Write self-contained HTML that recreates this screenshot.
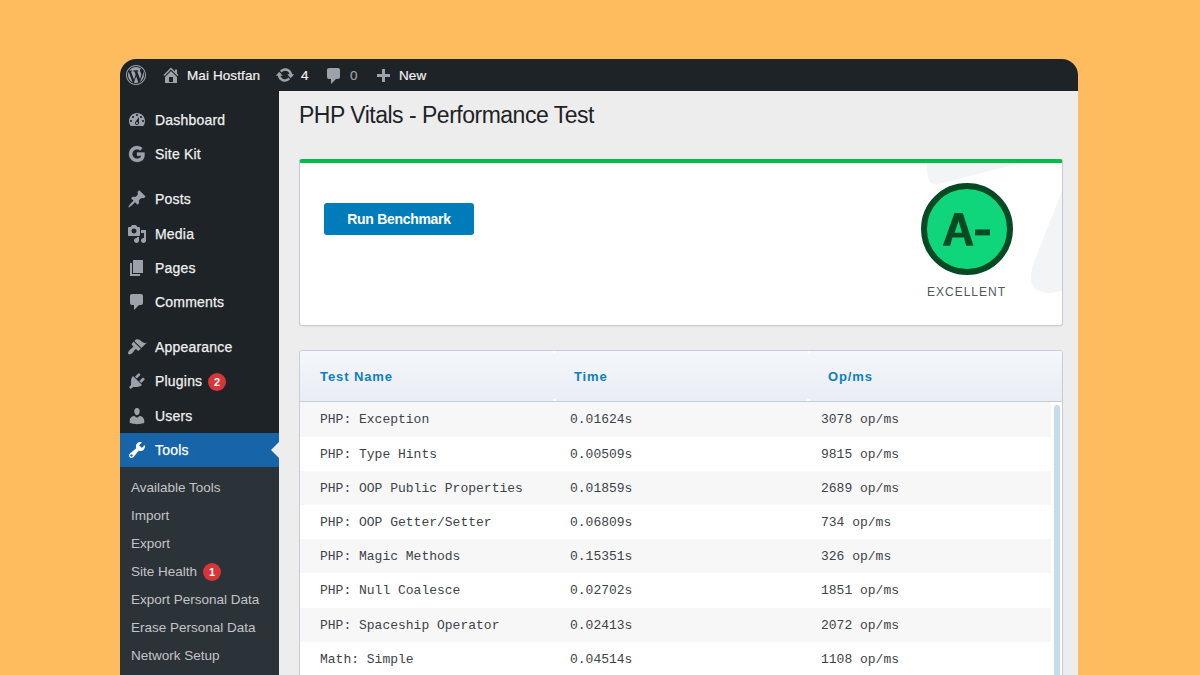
<!DOCTYPE html>
<html><head><meta charset="utf-8">
<style>
*{box-sizing:border-box;margin:0;padding:0}
html,body{width:1200px;height:675px;overflow:hidden}
body{background:#ffbc5f;font-family:"Liberation Sans",sans-serif;position:relative}
#win{position:absolute;left:120px;top:59px;width:958px;height:640px;border-radius:16px 16px 0 0;overflow:hidden;background:#ededed}
#bar{position:absolute;left:0;top:0;width:958px;height:32px;background:#1d2327;color:#f0f0f1;font-size:13.5px}
#bar .t{position:absolute;top:0.5px;line-height:32px;white-space:nowrap;letter-spacing:0.1px;-webkit-text-stroke:0.2px currentColor}
#side{position:absolute;left:0;top:32px;width:159px;height:620px;background:#1d2327}
.mi{position:absolute;left:0;width:159px;height:34px;color:#f0f0f1;font-size:14px;line-height:34px}
.mi .t{position:absolute;left:35px;top:0;white-space:nowrap;letter-spacing:0.2px;-webkit-text-stroke:0.25px currentColor}
.cur{background:#1765a8;color:#fff}
#sub{position:absolute;left:0;top:376px;width:159px;height:300px;background:#2c3338}
.si{position:absolute;left:11px;font-size:13.5px;color:#c3c4c7;line-height:28px;white-space:nowrap;letter-spacing:0px}
.badge{position:absolute;width:18px;height:18px;border-radius:9px;background:#d63638;color:#fff;font-size:11px;font-weight:700;line-height:18px;text-align:center;letter-spacing:0;-webkit-text-stroke:0}
#content{position:absolute;left:159px;top:32px;width:799px;height:620px;background:#ededed}
h1{position:absolute;left:20px;top:10.5px;font-size:23px;font-weight:400;color:#1d2327;letter-spacing:-0.5px;white-space:nowrap}
#card1{position:absolute;left:20px;top:68px;width:764px;height:167px;box-shadow:0 1px 2px rgba(0,0,0,.05);background:#fff;border:1px solid #c5ced8;border-top:4px solid #00bd4a;border-radius:3px;overflow:hidden}
#btn{position:absolute;left:24px;top:40px;width:150px;height:32px;background:#007cba;border-radius:3px;color:#fff;font-size:14px;font-weight:700;text-align:center;line-height:32px;letter-spacing:-0.3px}
#grade{position:absolute;left:621px;top:20px;width:92px;height:92px;border-radius:50%;background:#0fd67a;border:6px solid #064a24;color:#064a24;font-size:47px;font-weight:700;text-align:center;line-height:80px;letter-spacing:-1px;text-indent:-1px}
#exc{position:absolute;left:590.5px;top:122px;width:152px;text-align:center;font-size:12px;letter-spacing:1px;color:#50575e}
#card2{position:absolute;left:20px;top:259px;width:764px;height:400px;background:#fff;border:1px solid #c5ced8;border-radius:3px;overflow:hidden}
#thead{position:absolute;left:0;top:0;width:762px;height:51px;background:linear-gradient(#f4f7fb,#e9edf4);border-bottom:1px solid #c5ced8}
.th{position:absolute;top:1px;line-height:50px;font-size:13px;font-weight:700;color:#0e80c0;white-space:nowrap;letter-spacing:0.9px}
.row{position:absolute;left:0;width:751px;height:35px;font-family:"Liberation Mono",monospace;font-size:13px;color:#3c434a;line-height:35px}
.row.g{background:#f7f7f7}
.row span{position:absolute;top:1px;white-space:nowrap}
#sb{position:absolute;left:754px;top:54px;width:6px;height:400px;background:#c5dcec;border-radius:3px}

</style></head><body>
<div id="win">
  <div id="bar">
    <svg style="position:absolute;left:6px;top:6px" width="20" height="20" viewBox="0 0 20 20"><path d="M20 10c0-5.52-4.48-10-10-10S0 4.48 0 10s4.48 10 10 10 10-4.48 10-10zM10 1.01c4.97 0 8.99 4.02 8.99 8.99s-4.02 8.99-8.99 8.99S1.01 14.97 1.01 10 5.03 1.01 10 1.01zM8.01 14.82L4.96 6.61c.49-.03 1.05-.08 1.05-.08.43-.05.38-1.01-.06-.99 0 0-1.29.1-2.13.1-.15 0-.33 0-.52-.01 1.44-2.17 3.9-3.6 6.7-3.6 2.09 0 3.99.79 5.41 2.09-.6-.08-1.45.35-1.45 1.42 0 .66.38 1.22.79 1.88.31.54.5 1.22.5 2.21 0 1.34-1.27 4.48-1.27 4.48l-2.71-7.5c.48-.03.75-.16.75-.16.43-.05.38-1.1-.05-1.08 0 0-1.3.11-2.14.11-.78 0-2.11-.11-2.11-.11-.43-.02-.48 1.06-.05 1.08l.84.08 1.12 3.04zm6.02 2.15L16.64 10s.67-1.69.39-3.81c.63 1.14.94 2.42.94 3.81 0 2.96-1.56 5.58-3.94 6.97zM2.68 6.77L6.5 17.25c-2.67-1.3-4.5-4.08-4.5-7.25 0-1.2.25-2.29.68-3.23zm7.45 4.53l2.29 6.25c-.75.27-1.57.42-2.42.42-.72 0-1.41-.11-2.06-.3z" fill="#9ca2a9" fill-rule="evenodd"/></svg>
    <svg style="position:absolute;left:41px;top:6px" width="20" height="20" viewBox="0 0 20 20"><path d="M16 8.5l1.53 1.53-1.06 1.06L10 4.62l-6.47 6.47-1.06-1.06L10 2.5l4 4v-2h2v4zm-6-2.46l6 5.99V18H4v-5.97zM12 17v-5H8v5h4z" fill="#9ca2a9" fill-rule="evenodd"/></svg>
    <div class="t" style="left:67px">Mai Hostfan</div>
    <svg style="position:absolute;left:155px;top:6px" width="20" height="20" viewBox="0 0 20 20"><path d="M10.2 3.28c3.53 0 6.43 2.61 6.92 6h2.08l-3.5 4-3.5-4h2.32c-.45-1.97-2.21-3.45-4.32-3.45-1.45 0-2.73.71-3.54 1.78L4.95 5.66C6.230 4.2 8.11 3.28 10.2 3.28zm-.4 13.44c-3.52 0-6.43-2.61-6.920-6H.8l3.5-4c1.17 1.33 2.33 2.67 3.5 4H5.48c.45 1.97 2.21 3.45 4.32 3.45 1.45 0 2.73-.71 3.54-1.78l1.71 1.95c-1.28 1.46-3.15 2.38-5.25 2.38z" fill="#9ca2a9" fill-rule="evenodd"/></svg>
    <div class="t" style="left:181px">4</div>
    <svg style="position:absolute;left:204px;top:7px" width="20" height="20" viewBox="0 0 20 20"><path d="M5 2h9c1.1 0 2 .9 2 2v7c0 1.1-.9 2-2 2h-2l-5 5v-5H5c-1.1 0-2-.9-2-2V4c0-1.1.9-2 2-2z" fill="#9ca2a9" fill-rule="evenodd"/></svg>
    <div class="t" style="left:230px;color:#9ca2a9">0</div>
    <svg style="position:absolute;left:253px;top:8px" width="20" height="20" viewBox="0 0 20 20"><path d="M17 7v3h-5v5H9v-5H4V7h5V2h3v5h5z" fill="#9ca2a9" fill-rule="evenodd"/></svg>
    <div class="t" style="left:279px">New</div>
  </div>
  <div id="side">
<div class="mi" style="top:12px"><svg style="position:absolute;left:7px;top:7px" width="20" height="20" viewBox="0 0 20 20"><path d="M3.76 16h12.48c1.1-1.37 1.76-3.11 1.76-5 0-4.42-3.58-8-8-8s-8 3.58-8 8c0 1.89.66 3.63 1.76 5zM10 4c.55 0 1 .45 1 1s-.45 1-1 1-1-.45-1-1 .45-1 1-1zM6 6c.55 0 1 .45 1 1s-.45 1-1 1-1-.45-1-1 .45-1 1-1zm8 0c.55 0 1 .45 1 1s-.45 1-1 1-1-.45-1-1 .45-1 1-1zm-5.37 5.55L12 7v6c0 1.1-.9 2-2 2s-2-.9-2-2c0-.57.24-1.08.63-1.450zM4 10c.55 0 1 .45 1 1s-.45 1-1 1-1-.45-1-1 .45-1 1-1zm12 0c.55 0 1 .45 1 1s-.45 1-1 1-1-.45-1-1 .45-1 1-1zm-5 3c0-.55-.45-1-1-1s-1 .45-1 1 .45 1 1 1 1-.45 1-1z" fill="#9ca2a9" fill-rule="evenodd"/></svg><span class="t">Dashboard</span></div>
<div class="mi" style="top:46px"><svg style="position:absolute;left:7px;top:7px" width="20" height="20" viewBox="0 0 20 20"><path d="M17.6 10.2c0-.6-.1-1.2-.2-1.7H10v3.3h4.3c-.2 1-.7 1.9-1.6 2.5l2.6 2.1c1.5-1.4 2.3-3.5 2.3-6.2z M10 18c2.2 0 4-.7 5.3-2l-2.6-2c-.7.5-1.6.8-2.7.8-2.1 0-3.9-1.4-4.5-3.3L2.8 13.600C4.1 16.2 6.9 18 10 18z M5.5 11.5c-.2-.5-.3-1-.3-1.5s.1-1 .3-1.5L2.8 6.4C2.3 7.5 2 8.7 2 10s.3 2.5.8 3.6l2.7-2.1z M10 5.2c1.2 0 2.3.4 3.1 1.2l2.3-2.3C14 2.8 12.2 2 10 2 6.9 2 4.1 3.8 2.8 6.4l2.7 2.1c.6-1.9 2.4-3.3 4.5-3.3z" fill="#9ca2a9" fill-rule="nonzero" stroke="#9ca2a9" stroke-width="0.3"/></svg><span class="t">Site Kit</span></div>
<div class="mi" style="top:91px"><svg style="position:absolute;left:7px;top:7px" width="20" height="20" viewBox="0 0 20 20"><path d="M10.44 3.02l1.82-1.82 6.36 6.35-1.83 1.820c-1.05-.68-2.48-.57-3.41.36l-.75.75c-.92.93-1.04 2.35-.35 3.41l-1.83 1.82-2.41-2.41-2.8 2.79c-.42.42-3.38 2.71-3.8 2.29s1.86-3.39 2.28-3.81l2.79-2.79L4.1 9.36l1.83-1.82c1.05.69 2.48.57 3.4-.36l.75-.75c.93-.92 1.05-2.35.36-3.41z" fill="#9ca2a9" fill-rule="evenodd"/></svg><span class="t">Posts</span></div>
<div class="mi" style="top:126px"><svg style="position:absolute;left:7px;top:7px" width="20" height="20" viewBox="0 0 20 20"><path d="M13 11V4c0-.55-.45-1-1-1h-1.67L9 1H5L3.67 3H2c-.55 0-1 .45-1 1v7c0 .55.45 1 1 1h10c.55 0 1-.45 1-1zM7 4.5c1.38 0 2.5 1.12 2.5 2.5S8.38 9.5 7 9.5 4.5 8.38 4.5 7 5.62 4.5 7 4.5zM14 6h5v10.5c0 1.38-1.12 2.5-2.5 2.5S14 17.880 14 16.5s1.12-2.5 2.5-2.5c.17 0 .34.02.5.05V9h-3V6zm-4 8.05V13h2v3.5c0 1.38-1.12 2.5-2.5 2.5S7 17.88 7 16.5 8.12 14 9.5 14c.17 0 .34.02.5.05z" fill="#9ca2a9" fill-rule="evenodd"/></svg><span class="t">Media</span></div>
<div class="mi" style="top:160px"><svg style="position:absolute;left:7px;top:7px" width="20" height="20" viewBox="0 0 20 20"><path d="M6 15V2h10v13H6zm-1 1h8v2H3V5h2v11z" fill="#9ca2a9" fill-rule="evenodd"/></svg><span class="t">Pages</span></div>
<div class="mi" style="top:194px"><svg style="position:absolute;left:7px;top:7px" width="20" height="20" viewBox="0 0 20 20"><path d="M5 2h9c1.1 0 2 .9 2 2v7c0 1.1-.9 2-2 2h-2l-5 5v-5H5c-1.1 0-2-.9-2-2V4c0-1.1.9-2 2-2z" fill="#9ca2a9" fill-rule="evenodd"/></svg><span class="t">Comments</span></div>
<div class="mi" style="top:239px"><svg style="position:absolute;left:7px;top:7px" width="20" height="20" viewBox="0 0 20 20"><path d="M14.48 11.06L7.41 3.99l1.5-1.5c.5-.56 2.3-.47 3.51.32 1.21.8 1.43 1.28 2.91 2.1 1.18.64 2.45 1.26 4.45.85zm-.71.71L6.7 4.7 4.93 6.47c-.39.39-.39 1.02 0 1.41l1.06 1.06c.39.39.39 1.03 0 1.42-.6.6-1.43 1.11-2.21 1.69-.35.26-.7.53-1.01.84C1.430 14.23.4 16.08 1.4 17.07c.99 1 2.84-.03 4.18-1.36.31-.31.58-.66.85-1.02.57-.78 1.08-1.61 1.69-2.21.39-.39 1.02-.39 1.41 0l1.06 1.06c.39.39 1.02.39 1.41 0z" fill="#9ca2a9" fill-rule="evenodd"/></svg><span class="t">Appearance</span></div>
<div class="mi" style="top:273px"><svg style="position:absolute;left:7px;top:7px" width="20" height="20" viewBox="0 0 20 20"><path d="M13.11 4.36L9.87 7.6 8 5.73l3.24-3.24c.35-.34 1.05-.2 1.56.32.52.51.66 1.21.31 1.55zm-8 1.77l.91-1.12 9.01 9.01-1.19.84c-.71.71-2.63 1.16-3.82 1.16H6.14L4.9 17.26c-.59.59-1.54.59-2.12 0-.59-.58-.59-1.53 0-2.12l1.24-1.24v-3.88c0-1.13.4-3.19 1.09-3.89zm7.26 3.97l3.24-3.240c.34-.35 1.04-.21 1.55.31.52.51.66 1.21.31 1.55l-3.24 3.25z" fill="#9ca2a9" fill-rule="evenodd"/></svg><span class="t">Plugins</span><span class="badge" style="left:88px;top:9px">2</span></div>
<div class="mi" style="top:308px"><svg style="position:absolute;left:7px;top:7px" width="20" height="20" viewBox="0 0 20 20"><path d="M10 9.25c-2.27 0-2.73-3.44-2.73-3.44C7 4.02 7.82 2 9.97 2c2.16 0 2.98 2.02 2.71 3.81 0 0-.41 3.44-2.68 3.44zm0 2.57L12.72 10c2.39 0 4.52 2.33 4.52 4.53v2.49s-3.65 1.13-7.24 1.13c-3.65 0-7.24-1.13-7.24-1.13v-2.49c0-2.25 1.940-4.48 4.47-4.48z" fill="#9ca2a9" fill-rule="evenodd"/></svg><span class="t">Users</span></div>
<div class="mi cur" style="top:342px"><svg style="position:absolute;left:7px;top:7px" width="20" height="20" viewBox="0 0 20 20"><path d="M16.68 9.77c-1.34 1.34-3.3 1.67-4.95.99l-5.41 6.52c-.99.99-2.59.99-3.58 0s-.99-2.59 0-3.57l6.52-5.42c-.68-1.65-.35-3.61.99-4.95 1.28-1.28 3.12-1.62 4.72-1.06l-2.89 2.89 2.82 2.82 2.86-2.87c.53 1.58.18 3.39-1.08 4.65zM3.81 16.21c.4.39 1.04.39 1.43 0 .4-.4.4-1.04 0-1.43-.39-.4-1.03-.4-1.43 0-.39.39-.39 1.03 0 1.430z" fill="#fff" fill-rule="evenodd"/><circle cx='4.52' cy='15.5' r='1' fill='#1765a8'/></svg><span class="t">Tools</span></div>

    <svg style="position:absolute;left:151px;top:351px" width="8" height="16" viewBox="0 0 8 16"><path d="M8 0 L0 8 L8 16Z" fill="#ededed"/></svg>
    <div id="sub">
<div class="si" style="top:7px">Available Tools</div>
<div class="si" style="top:35px">Import</div>
<div class="si" style="top:63px">Export</div>
<div class="si" style="top:91px">Site Health<span class="badge" style="left:72px;top:5px">1</span></div>
<div class="si" style="top:119px">Export Personal Data</div>
<div class="si" style="top:147px">Erase Personal Data</div>
<div class="si" style="top:175px">Network Setup</div>

    </div>
  </div>
  <div id="content">
    <h1>PHP Vitals - Performance Test</h1>
    <div id="card1">
      <svg style="position:absolute;left:600px;top:-5px" width="164" height="167" viewBox="0 0 164 167"><path d="M26 0 H141 L38 26 Q29 28 27.5 17 Z" fill="#f3f4f6"/><path d="M164 28 L134 104 Q129 118 132 126 Q136 135 150 135 Q158 134 164 132 Z" fill="#f3f4f6"/></svg>
      <div id="btn">Run Benchmark</div>
      <div id="grade"><svg style="position:absolute;left:8px;top:16px" width="65" height="50" viewBox="0 0 877.5 675"><path d="M105 550 L262 108 L375 108 L520 550 L420 550 L390 440 L235 440 L205 550 Z M265 375 L318 215 L365 375 Z" fill="#064a24" fill-rule="evenodd"/><rect x="540" y="330" width="202" height="80" fill="#064a24"/></svg></div>
      <div id="exc">EXCELLENT</div>
    </div>
    <div id="card2">
      <div id="thead">
        <div class="th" style="left:20px">Test Name</div>
        <div class="th" style="left:274px">Time</div>
        <div class="th" style="left:528px">Op/ms</div>
        <div style="position:absolute;left:253px;top:0;width:3px;height:2px;background:#fff;opacity:.8"></div>
        <div style="position:absolute;left:253px;top:48px;width:3px;height:2px;background:#fff;opacity:.8"></div>
        <div style="position:absolute;left:507px;top:0;width:3px;height:2px;background:#fff;opacity:.8"></div>
        <div style="position:absolute;left:507px;top:48px;width:3px;height:2px;background:#fff;opacity:.8"></div>
      </div>
<div class="row g" style="top:51px;height:35px;line-height:34px"><span style="left:20px">PHP: Exception</span><span style="left:270px">0.01624s</span><span style="left:521px">3078 op/ms</span></div>
<div class="row" style="top:86px;height:34px;line-height:34px"><span style="left:20px">PHP: Type Hints</span><span style="left:270px">0.00509s</span><span style="left:521px">9815 op/ms</span></div>
<div class="row g" style="top:120px;height:34px;line-height:34px"><span style="left:20px">PHP: OOP Public Properties</span><span style="left:270px">0.01859s</span><span style="left:521px">2689 op/ms</span></div>
<div class="row" style="top:154px;height:34px;line-height:34px"><span style="left:20px">PHP: OOP Getter/Setter</span><span style="left:270px">0.06809s</span><span style="left:521px">734 op/ms</span></div>
<div class="row g" style="top:188px;height:34px;line-height:34px"><span style="left:20px">PHP: Magic Methods</span><span style="left:270px">0.15351s</span><span style="left:521px">326 op/ms</span></div>
<div class="row" style="top:222px;height:35px;line-height:34px"><span style="left:20px">PHP: Null Coalesce</span><span style="left:270px">0.02702s</span><span style="left:521px">1851 op/ms</span></div>
<div class="row g" style="top:257px;height:34px;line-height:34px"><span style="left:20px">PHP: Spaceship Operator</span><span style="left:270px">0.02413s</span><span style="left:521px">2072 op/ms</span></div>
<div class="row" style="top:291px;height:35px;line-height:34px"><span style="left:20px">Math: Simple</span><span style="left:270px">0.04514s</span><span style="left:521px">1108 op/ms</span></div>

      <div id="sb"></div>
    </div>
  </div>
</div>
</body></html>
